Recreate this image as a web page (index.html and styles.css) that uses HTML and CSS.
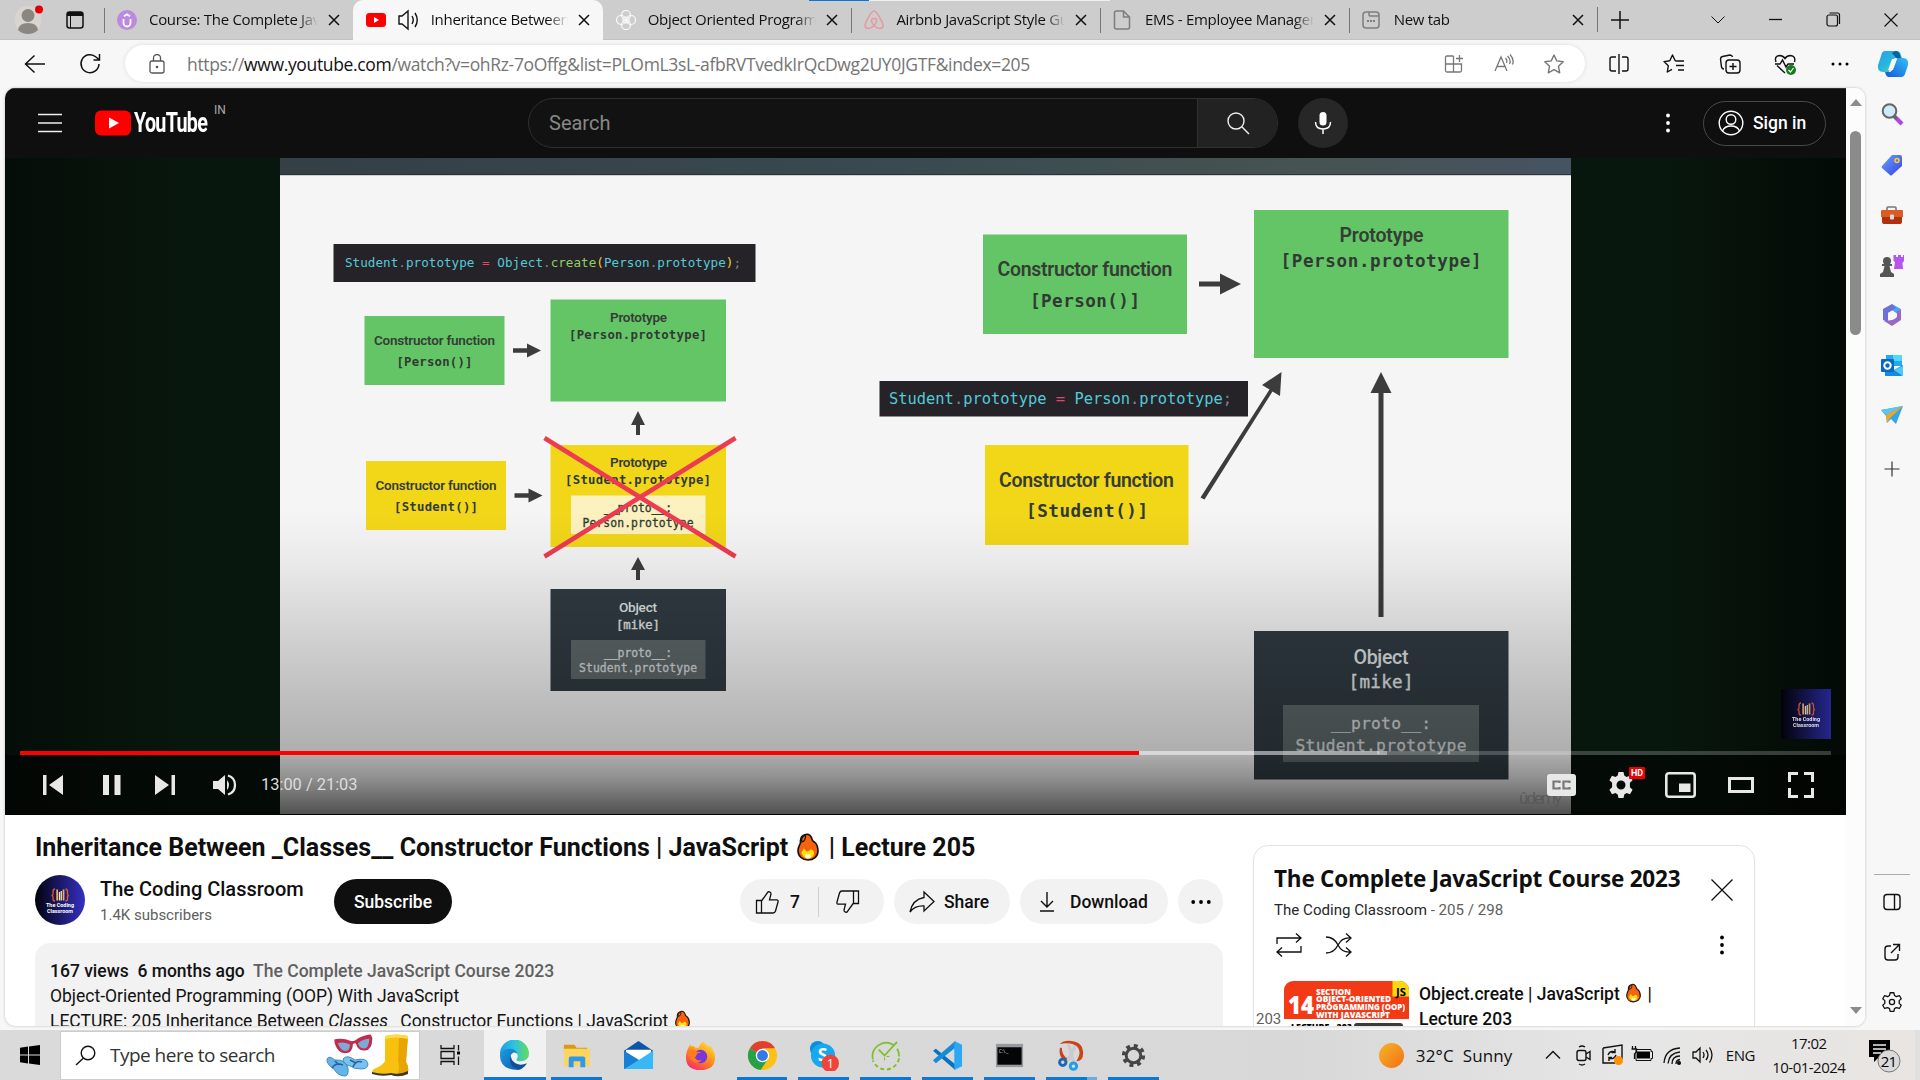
FILE: index.html
```html
<!DOCTYPE html>
<html lang="en">
<head>
<meta charset="utf-8">
<title>Inheritance Between Classes - YouTube</title>
<link rel="stylesheet" href="styles.css">
</head>
<body>
<svg class="defs" width="0" height="0">
  <defs>
    <symbol id="x" viewBox="0 0 12 12"><path d="M1 1L11 11M11 1L1 11" fill="none" stroke="#111" stroke-width="1.5"/></symbol>
    <symbol id="flame" viewBox="0 0 22 28">
      <path d="M8.500 1.500C12 .5 14.500 3 15.500 7.500C16.500 8 17 9.500 17.500 9C20 11 21 14 21 18C21 23.500 16.500 27 11 27S1 23.500 1 17.500C1 14.500 2.500 12.500 3.500 10C3 6 4 2.500 8.500 1.500Z" fill="#f7630c" stroke="#111" stroke-width="1.600"/>
      <path d="M8.500 2C5 3.500 4 6 5 9C7.500 8.500 9 5 8.500 2Z" fill="#f7630c" stroke="#111" stroke-width="1.200"/>
      <path d="M4.500 20C5 17.500 6 18 6.500 15.500C8 16 8.500 18 10 18.500C11.500 18.500 13.500 16 14.500 16.500C16.500 17.500 18 19.500 16.500 22.500C14.500 26.500 6 26.500 4.500 20Z" fill="#ffde0a"/>
      <path d="M8 24L9 20.500L11 22L13 20.500L14 24C13 26 9 26 8 24Z" fill="#fff7d6"/>
    </symbol>
    <linearGradient id="navy"><stop offset="0" stop-color="#02020c"/><stop offset="1" stop-color="#3430c4"/></linearGradient>
    <linearGradient id="navydim"><stop offset="0" stop-color="#020208"/><stop offset="1" stop-color="#26268e"/></linearGradient>
    <symbol id="books" viewBox="0 0 50 50">
      <path d="M20 14q-2 0-2 3v2q0 1.500-1.500 1.500q1.500 0 1.500 1.500v2q0 2 2 2M30.500 14q2 0 2 3v2q0 1.500 1.500 1.500q-1.500 0-1.500 1.500v2q0 2-2 2" fill="none" stroke="#e8572c" stroke-width="1.300"/>
      <path d="M21.300 14.500h1.700v11h-1.700zM27.700 14.500h1.700v11h-1.700z" fill="#e9b15c"/><path d="M23.800 17h1.300v8.500h-1.300zM25.600 16h1.300v9.500h-1.300z" fill="#f5dfae"/>
      <text x="25" y="32" class="books-text" textLength="28" lengthAdjust="spacingAndGlyphs">The Coding</text>
      <text x="25" y="37.500" class="books-text" textLength="26" lengthAdjust="spacingAndGlyphs">Classroom</text>
    </symbol>
  </defs>
</svg>

<header class="tabs">
  <div class="tabs-lead">
    <svg width="30" height="34" viewBox="0 0 30 34"><ellipse cx="15" cy="17" rx="13.500" ry="14" fill="#d8d5d0"/><circle cx="15" cy="12.500" r="6.500" fill="#8b8680"/><path d="M5 27q1-7 10-7t10 7q-4 4-10 4T5 27Z" fill="#8b8680"/><circle cx="26" cy="6.500" r="4" fill="#e80000"/></svg>
    <svg width="18" height="18" viewBox="0 0 18 18"><rect x="1" y="1" width="16" height="16" rx="2.500" fill="none" stroke="#111" stroke-width="1.500"/><path d="M1 1h16v4H1z" fill="#111"/><path d="M4.500 5v12" stroke="#111"/></svg>
  </div>
  <div class="tab"><svg class="fav" viewBox="0 0 20 20"><circle cx="10" cy="10" r="10" fill="#bb8ae0"/><path d="M6.500 9v4a3.500 3.500 0 0 0 7 0V9M7 6.300L10 4.300L13 6.300" fill="none" stroke="#fff" stroke-width="1.800"/></svg><span class="tab-title">Course: The Complete JavaScript</span><svg class="close"><use href="#x"/></svg></div>
  <div class="tab active"><svg class="fav" viewBox="0 0 20 20"><rect y="3" width="20" height="14" rx="3.500" fill="#f00"/><path d="M8 7l5 3-5 3z" fill="#fff"/></svg><svg class="sound" viewBox="0 0 22 22"><path d="M1 7h3l6-5v18l-6-5H1z" fill="none" stroke="#111" stroke-width="1.400"/><path d="M14 7q2.500 4 0 8M17 4q4.500 7 0 14" fill="none" stroke="#111" stroke-width="1.400"/></svg><span class="tab-title">Inheritance Between _Classes</span><svg class="close"><use href="#x"/></svg></div>
  <div class="tab bare"><svg class="fav" viewBox="0 0 20 20"><g fill="none" stroke="#fafafa" stroke-width="1.200"><circle cx="10" cy="5" r="4.500"/><circle cx="10" cy="15" r="4.500"/><circle cx="5" cy="10" r="4.500"/><circle cx="15" cy="10" r="4.500"/><circle cx="10" cy="10" r="3"/></g></svg><span class="tab-title">Object Oriented Programming</span><svg class="close"><use href="#x"/></svg></div>
  <div class="tab"><svg class="fav" viewBox="0 0 20 20"><path d="M10 15.500C6 11 7 8.500 10 8.500S14 11 10 15.500C6 20 1 19 1 15.500C1 13 7 1 10 1S19 13 19 15.500C19 19 14 20 10 15.500Z" fill="none" stroke="#e59a9d" stroke-width="1.500"/></svg><span class="tab-title">Airbnb JavaScript Style Guide</span><svg class="close"><use href="#x"/></svg></div>
  <div class="tab"><svg class="fav doc" viewBox="0 0 17 20"><path d="M3 1h7l6 6v10q0 2-2 2H3q-2 0-2-2V3q0-2 2-2ZM10 1v6h6" fill="none" stroke="#7d7d7d" stroke-width="1.500"/></svg><span class="tab-title">EMS - Employee Management</span><svg class="close"><use href="#x"/></svg></div>
  <div class="tab"><svg class="fav doc" viewBox="0 0 18 20"><rect x="1" y="2" width="16" height="16" rx="3" fill="none" stroke="#7d7d7d" stroke-width="1.500"/><path d="M7 2v3q0 1 1 1h9" fill="none" stroke="#7d7d7d" stroke-width="1.500"/><path d="M5 11h2M8 11h2M11 11h2" stroke="#7d7d7d" stroke-width="2"/></svg><span class="tab-title">New tab</span><svg class="close"><use href="#x"/></svg></div>
  <div class="newtab"><svg width="18" height="18" viewBox="0 0 18 18"><path d="M9 0v18M0 9h18" stroke="#111" stroke-width="1.500"/></svg></div>
  <div class="win"><svg width="14" height="8" viewBox="0 0 14 8"><path d="M.5 .5L7 7L13.500 .5" fill="none" stroke="#111"/></svg></div>
  <div class="win"><svg width="13" height="3"><path d="M0 1.500h13" stroke="#111" stroke-width="1.300"/></svg></div>
  <div class="win"><svg width="15" height="15" viewBox="0 0 15 15"><rect x="1" y="3" width="10.500" height="11" rx="2" fill="none" stroke="#111" stroke-width="1.200"/><path d="M3.500 1h8q2 0 2 2v9" fill="none" stroke="#111" stroke-width="1.200"/></svg></div>
  <div class="win"><svg width="14" height="14" viewBox="0 0 14 14"><path d="M.5 .5l13 13M13.500 .5L.5 13.500" stroke="#111" stroke-width="1.100"/></svg></div>
  <i class="loadbar"></i>
</header>

<div class="toolbar">
  <div class="nav"><svg width="22" height="20" viewBox="0 0 22 20"><path d="M21 10H2M10.500 1.500L1.500 10l9 8.500" fill="none" stroke="#111" stroke-width="1.500"/></svg></div>
  <div class="nav"><svg width="22" height="22" viewBox="0 0 22 22"><path d="M20 11a9 9 0 1 1-3-7l3 2.500M20.500 1v6h-6" fill="none" stroke="#111" stroke-width="1.500"/></svg></div>
  <div class="address">
    <svg width="16" height="20" viewBox="0 0 16 20"><rect x="1" y="7" width="14" height="12" rx="2" fill="none" stroke="#555" stroke-width="1.300"/><path d="M4.500 7V4a3.500 3.500 0 0 1 7 0v3" fill="none" stroke="#555" stroke-width="1.300"/><circle cx="8" cy="13" r="1.300" fill="#555"/></svg>
    <span class="url">https://<b>www.youtube.com</b>/watch?v=ohRz-7oOffg&amp;list=PLOmL3sL-afbRVTvedkIrQcDwg2UY0JGTF&amp;index=205</span>
    <span class="acts">
      <svg viewBox="0 0 22 22"><path d="M10.500 3H4q-1.500 0-1.500 1.500v13Q2.500 19 4 19h13q1.500 0 1.500-1.500V11h-16M10.500 3v16M16.500 2v7M13 5.500h7" fill="none" stroke="#777" stroke-width="1.300"/></svg>
      <svg viewBox="0 0 22 22"><path d="M2 18L8 4l6 14M4 13.500h8M12.500 5q2 2.500 1 5M14.500 3q4 4 2 8M17 1.500q4.500 5 2.500 10" fill="none" stroke="#777" stroke-width="1.300"/></svg>
      <svg viewBox="0 0 22 22"><path d="M11 2l2.800 5.900 6.400.9-4.700 4.500 1.200 6.500-5.700-3.200-5.700 3.200 1.200-6.500L1.800 8.800l6.400-.9Z" fill="none" stroke="#777" stroke-width="1.400" stroke-linejoin="round"/></svg>
    </span>
  </div>
  <div class="tools">
    <svg viewBox="0 0 22 22"><path d="M8 4H4Q2 4 2 6v10q0 2 2 2h4M14 4h4q2 0 2 2v10q0 2-2 2h-4M11 1v20" fill="none" stroke="#111" stroke-width="1.400"/></svg>
    <svg viewBox="0 0 22 22"><path d="M14 8l-1.800-.3L9.500 2 6.800 7.700 1 8.600l4.300 4.200-1 6.200L9 16.300M14 8h7M13 12.500h8M15 17h6" fill="none" stroke="#111" stroke-width="1.400" stroke-linejoin="round"/></svg>
    <svg viewBox="0 0 22 22"><path d="M5 16q-2 0-2.500-2L1.500 6q0-2 2-2.500L11 2q2 0 2.500 2" fill="none" stroke="#111" stroke-width="1.400"/><rect x="7" y="7" width="14" height="13" rx="3" fill="none" stroke="#111" stroke-width="1.400"/><path d="M14 10v7M10.500 13.500h7" stroke="#111" stroke-width="1.400"/></svg>
    <svg viewBox="0 0 22 22"><path d="M2 9Q0 3 5.500 2.500Q9 2.500 11 5.500Q13 2.500 16.500 2.500Q22 3 20.500 9M3 12.500L11 20M1 11h5l2.500-4 3.500 7 2-3h6" fill="none" stroke="#111" stroke-width="1.400"/><circle cx="17" cy="17" r="5" fill="#187a1e"/><path d="M14.500 17l2 2 3-4" fill="none" stroke="#fff" stroke-width="1.200"/></svg>
    <svg viewBox="0 0 22 22"><circle cx="4" cy="11" r="1.500"/><circle cx="11" cy="11" r="1.500"/><circle cx="18" cy="11" r="1.500"/></svg>
  </div>
  <svg class="copilot" viewBox="0 0 32 32"><defs><linearGradient id="c1" y2="1"><stop stop-color="#2f9bf0"/><stop offset=".5" stop-color="#25b8dc"/><stop offset="1" stop-color="#6fe086"/></linearGradient><linearGradient id="c2" x1="1" x2="0" y2="1"><stop stop-color="#2fc2f4"/><stop offset="1" stop-color="#1b54dc"/></linearGradient></defs><path d="M8 3h12q3 0 4 4l1 3h-6q-3 0-4 4l-3 10H6q-6 0-5-7l3-9Q5 3 8 3Z" fill="url(#c1)"/><path d="M18 3q4 0 5 4l1 3h-5l-4-5Z" fill="#0b5f9f"/><path d="M24 29H12q-3 0-4-5h5q2-1 3-4l4-10h6q6 0 5 7l-3 9q-1 3-4 3Z" fill="url(#c2)"/><path d="M15 11h5l-4 11h-5Z" fill="#f7f7f7"/></svg>
</div>

<div class="body">
  <main class="page">
    <div class="content">
      <div class="masthead">
        <svg class="menu" viewBox="0 0 24 20"><path d="M0 1.500h24M0 10h24M0 18.500h24" stroke="#eee" stroke-width="1.300"/></svg>
        <div class="logo"><svg width="36" height="26" viewBox="0 0 36 26"><rect width="36" height="25" y=".5" rx="6" fill="#f00"/><path d="M14 7.500l10 5.500-10 5.500z" fill="#fff"/></svg><span class="logo-word"><span>YouTube</span></span><sup>IN</sup></div>
        <div class="search"><span>Search</span><div class="search-btn"><svg width="24" height="24" viewBox="0 0 24 24"><circle cx="10" cy="10" r="8" fill="none" stroke="#eee" stroke-width="1.400"/><path d="M15.800 15.800L23 23" stroke="#eee" stroke-width="1.400"/></svg></div></div>
        <div class="mic"><svg width="20" height="26" viewBox="0 0 20 26"><rect x="6.500" y="2" width="7" height="13.500" rx="3.500" fill="#fff"/><path d="M2.500 12q0 7 7.500 7t7.500-7M10 19v5" fill="none" stroke="#fff" stroke-width="1.500"/></svg></div>
        <svg class="kebab" viewBox="0 0 4 20"><circle cx="2" cy="2.500" r="1.900"/><circle cx="2" cy="10" r="1.900"/><circle cx="2" cy="17.500" r="1.900"/></svg>
        <div class="signin"><svg width="26" height="26" viewBox="0 0 26 26" fill="none" stroke="#fff" stroke-width="1.400"><circle cx="13" cy="13" r="11.800"/><circle cx="13" cy="9.500" r="4.800"/><path d="M4.500 21q2-5 8.500-5t8.500 5"/></svg><span>Sign in</span></div>
      </div>

      <div class="player">
        <svg class="frame" viewBox="5 158 1841 657" width="1841" height="657">
          <defs>
            <linearGradient id="side"><stop stop-color="#050d08"/><stop offset=".1" stop-color="#08170d"/><stop offset=".9" stop-color="#08170d"/><stop offset="1" stop-color="#030a05"/></linearGradient>
            <linearGradient id="band"><stop stop-color="#343f46"/><stop offset=".5" stop-color="#3a4a50"/><stop offset=".8" stop-color="#465351"/><stop offset="1" stop-color="#465362"/></linearGradient>
            <linearGradient id="shade" x1="0" x2="0" y1="510" y2="814" gradientUnits="userSpaceOnUse"><stop stop-color="#000" stop-opacity="0"/><stop offset=".17" stop-color="#000" stop-opacity="0.045"/><stop offset=".4" stop-color="#000" stop-opacity=".14"/><stop offset=".62" stop-color="#000" stop-opacity=".225"/><stop offset=".8" stop-color="#000" stop-opacity=".29"/><stop offset=".88" stop-color="#000" stop-opacity=".41"/><stop offset=".94" stop-color="#000" stop-opacity=".54"/><stop offset="1" stop-color="#000" stop-opacity=".67"/></linearGradient>
            <path id="arrow" d="M0-2.200h14V-7L28 0 14 7V2.200H0Z"/>
          </defs>
          <rect x="5" y="158" width="1841" height="657" fill="url(#side)"/>
          <rect x="280" y="175" width="1291" height="639" fill="#f5f5f5"/>
          <rect x="280" y="158" width="1291" height="17" fill="url(#band)"/>
          <path d="M280 174.700h1291" stroke="#252e33"/>
          <g class="code">
            <path d="M333.500 244h422v38h-422zM879.500 381h368.500v35.500H879.500z" fill="#262328"/>
            <text x="345" y="266.500" font-size="12.600" textLength="396">Student<tspan class="d">.</tspan>prototype <tspan class="r">=</tspan> Object<tspan class="d">.</tspan><tspan class="g">create</tspan><tspan class="y">(</tspan>Person<tspan class="d">.</tspan>prototype<tspan class="y">)</tspan><tspan class="d">;</tspan></text>
            <text x="889" y="404" font-size="15.400" textLength="343">Student<tspan class="d">.</tspan>prototype <tspan class="r">=</tspan> Person<tspan class="d">.</tspan>prototype<tspan class="d">;</tspan></text>
          </g>
          <path d="M364.500 316h140v69h-140zM550.500 299.500h175.500v102H550.500zM983 234.500h204v99.500H983zM1254 210h254.500v148H1254z" fill="#64c567"/>
          <path d="M366 461h140v69H366zM550.500 445h175.500v102H550.500zM985 445h203.500v100H985z" fill="#f2d719"/>
          <path d="M550.500 589h175.500v102H550.500zM1254 631h254.500v148.500H1254z" fill="#303b42"/>
          <path d="M571 495.500h134.500v38.500H571z" fill="#fbf2bf"/>
          <path d="M571 640h134.500v39H571zM1283 705h196v57h-196z" fill="#5d6769"/>
          <g class="lbl">
            <text x="434.500" y="345" font-size="13.500" textLength="121">Constructor function</text>
            <text x="638.500" y="321.500" font-size="13.500" textLength="57">Prototype</text>
            <text x="436" y="490" font-size="13.500" textLength="121">Constructor function</text>
            <text x="638.500" y="466.500" font-size="13.500" textLength="57">Prototype</text>
            <text x="1085" y="276" font-size="19.500" textLength="175">Constructor function</text>
            <text x="1381.500" y="242" font-size="19.500" textLength="84">Prototype</text>
            <text x="1086.500" y="487" font-size="19.500" textLength="175">Constructor function</text>
            <g class="light"><text x="638" y="612" font-size="13.600" textLength="38">Object</text><text x="1381" y="664" font-size="19.600" textLength="55">Object</text></g>
          </g>
          <g class="mono">
            <text x="434.500" y="366" font-size="12.300" textLength="76">[Person()]</text>
            <text x="638" y="338.500" font-size="12.300" textLength="138">[Person.prototype]</text>
            <text x="436" y="511" font-size="12.300" textLength="84">[Student()]</text>
            <text x="638" y="483.500" font-size="12.300" textLength="146">[Student.prototype]</text>
            <text x="1085" y="306.500" font-size="17.600" textLength="110">[Person()]</text>
            <text x="1381" y="266.500" font-size="17.600" textLength="201">[Person.prototype]</text>
            <text x="1087" y="517" font-size="17.600" textLength="122">[Student()]</text>
          </g>
          <g class="mono thin">
            <g stroke="#303a32"><text x="638" y="511.500" font-size="11.400" textLength="68">__proto__:</text>
            <text x="638" y="527" font-size="11.400" textLength="111">Person.prototype</text></g>
            <g fill="#e4e7e8" stroke="#e4e7e8"><text x="638" y="628.500" font-size="12.300" textLength="44">[mike]</text><text x="1381" y="688" font-size="17.600" textLength="65">[mike]</text></g>
            <g fill="#d4d8d9" stroke="#d4d8d9"><text x="638" y="656.500" font-size="11.400" textLength="68">__proto__:</text>
            <text x="638" y="671.500" font-size="11.400" textLength="118">Student.prototype</text>
            <text x="1381" y="729" font-size="16.300" textLength="100">__proto__:</text>
            <text x="1381" y="750.500" font-size="16.300" textLength="171">Student.prototype</text></g>
          </g>
          <g fill="#3c3c3c">
            <use href="#arrow" x="513" y="350.500"/><use href="#arrow" x="514.500" y="495.500"/>
            <path d="M636 435v-10h-5L638 411l7 14h-5v10ZM636 580v-10h-5L638 557l7 13h-5v10Z"/>
            <path d="M1199 281.500h21v-8l21 10.500-21 10.500v-8h-21zM1378.500 617V393h-8L1381 372l10.500 21h-8v224z"/>
            <path d="M1204.500 499.500l68-108 7.500 4.500 1.500-24-19.500 13 7.500 4.500-69 108z"/>
          </g>
          <path d="M544.500 438L735.500 556.500M735.500 438L544.500 556.500" stroke="#ed3b51" stroke-width="4.600"/>
          <path d="M280 510h1291v304H280z" fill="url(#shade)"/>
          <text x="1519" y="804" class="udemy" textLength="43">ûdemy</text>
          <path d="M5 755H280V815H5zM1571 755h275v60h-275z" fill="#000" opacity=".5"/>
          <path d="M5 814H1846V815H5z"/>
          <rect x="1781" y="689" width="50" height="50" fill="url(#navydim)"/><use href="#books" x="1781" y="689" width="50" height="50" opacity=".85"/>
        </svg>
        <div class="overlay">
          <div class="progress"><i class="loaded"></i><i class="played"></i></div>
          <div class="controls">
            <svg class="prev" viewBox="0 0 20 20"><path d="M0 0h3.500v20H0zM20 0v20L6 10z"/></svg>
            <svg class="pause" viewBox="0 0 18 20"><path d="M0 0h6v20H0zM11.500 0h6v20h-6z"/></svg>
            <svg class="next" viewBox="0 0 20 20"><path d="M0 0v20l14-10zM16.500 0H20v20h-3.500z"/></svg>
            <svg class="vol" viewBox="0 0 24 24"><path d="M0 8v8h5l7 6V2L5 8zM14 7q4 5 0 10z"/><path d="M15 2.500q7 2 7 9.500t-7 9.500" fill="none" stroke="#e8e8e8" stroke-width="2.300"/></svg>
            <span class="time">13:00 / 21:03</span>
            <svg class="cc" viewBox="0 0 29 24"><path fill-rule="evenodd" d="M3 1h23q3 0 3 3v16q0 3-3 3H3q-3 0-3-3V4Q0 1 3 1Z"/><path d="M12.500 10V8.500h-6v7h6V14M22.500 10V8.500h-6v7h6V14" fill="none" stroke="#777" stroke-width="2.200"/></svg>
            <div class="gear"><svg viewBox="0 0 26 26"><path fill-rule="evenodd" d="M10.500 0h5l.8 3.600 2.200 1.300L22 3.800l2.600 4.400-2.700 2.500v4.600l2.700 2.500L22 22.200l-3.500-1.100-2.200 1.300L15.500 26h-5l-.8-3.600-2.200-1.300L4 22.200l-2.600-4.400 2.700-2.500v-4.600L1.400 8.200 4 3.800l3.500 1.100 2.200-1.300ZM13 8.500a4.500 4.500 0 1 0 0 9 4.500 4.500 0 0 0 0-9Z"/></svg><em>HD</em></div>
            <svg class="mini" viewBox="0 0 31 26"><rect x="1.300" y="1.300" width="28.400" height="23.400" rx="2.500" fill="none" stroke="#e8e8e8" stroke-width="2.600"/><path d="M14 11.500h11.500v8.500H14z"/></svg>
            <svg class="theater" viewBox="0 0 26 16"><rect x="1.500" y="1.500" width="23" height="13" fill="none" stroke="#e8e8e8" stroke-width="3"/></svg>
            <svg class="full" viewBox="0 0 26 26"><path d="M1.500 10V1.500H10M16 1.500h8.500V10M24.500 16v8.500H16M10 24.500H1.500V16" fill="none" stroke="#e8e8e8" stroke-width="3"/></svg>
          </div>
        </div>
      </div>

      <div class="below">
        <section class="primary">
          <h1>Inheritance Between _Classes__ Constructor Functions | JavaScript <svg class="flame"><use href="#flame"/></svg> | Lecture 205</h1>
          <div class="owner">
            <svg class="avatar" viewBox="0 0 50 50"><circle cx="25" cy="25" r="25" fill="url(#navy)"/><use href="#books" width="50" height="50"/></svg>
            <div class="chan"><strong>The Coding Classroom</strong><small>1.4K subscribers</small></div>
            <button class="subscribe">Subscribe</button>
            <div class="actions">
              <div class="pill like"><svg width="24" height="24" viewBox="0 0 24 24" fill="none" stroke="#0f0f0f" stroke-width="1.300"><path d="M1.500 10.500h5V23h-5zM6.500 11L13 1.800q3-.3 3 2.200L14.500 9.800H22q1.500.4 1 2.200L20.500 21q-.6 2-2.500 2H6.500"/></svg><span>7</span><i></i><svg width="24" height="24" viewBox="0 0 24 24" fill="none" stroke="#0f0f0f" stroke-width="1.300"><path d="M22.500 13.500h-5V1h5zM17.500 13L11 22.200q-3 .3-3-2.200l1.500-5.800H2q-1.500-.4-1-2.200L3.500 3Q4.100 1 6 1h11.500"/></svg></div>
              <div class="pill share"><svg width="26" height="24" viewBox="0 0 26 24"><path d="M15 2l10 9.500L15 21v-5Q6 15.500 1 22 3.500 9.500 15 7.500Z" fill="none" stroke="#0f0f0f" stroke-width="1.300"/></svg><span>Share</span></div>
              <div class="pill download"><svg width="16" height="20" viewBox="0 0 16 20"><path d="M8 0v15M2 9l6 6 6-6M1 19h14" fill="none" stroke="#0f0f0f" stroke-width="1.400"/></svg><span>Download</span></div>
              <div class="pill more"><svg width="20" height="4" viewBox="0 0 20 4"><circle cx="2.200" cy="2" r="1.900"/><circle cx="10" cy="2" r="1.900"/><circle cx="17.800" cy="2" r="1.900"/></svg></div>
            </div>
          </div>
          <div class="desc">
            <p class="meta">167 views&nbsp; 6 months ago&nbsp; <span>The Complete JavaScript Course 2023</span></p>
            <p>Object-Oriented Programming (OOP) With JavaScript</p>
            <p>LECTURE: 205 Inheritance Between <em>Classes</em>_ Constructor Functions | JavaScript <svg class="flame small"><use href="#flame"/></svg></p>
          </div>
        </section>
        <aside class="playlist">
          <div class="pl-head">
            <div><h2>The Complete JavaScript Course 2023</h2><p>The Coding Classroom <span>- 205 / 298</span></p></div>
            <svg class="pl-x" viewBox="0 0 22 22"><path d="M.5 .5l21 21M21.500 .5L.5 21.500" stroke="#0f0f0f" stroke-width="1.300"/></svg>
          </div>
          <div class="pl-tools">
            <svg viewBox="0 0 26 24"><path d="M1 11V5h24M20 .5l5 4.500-5 4.500M25 13v6H1M6 14.500L1 19l5 4.500" fill="none" stroke="#0f0f0f" stroke-width="1.300"/></svg>
            <svg viewBox="0 0 26 24"><path d="M0 4Q8 4 12 12T25 19M0 20Q8 20 12 12T25 5M20 .5l5 4.500-5 4.500M20 14.500l5 4.500-5 4.500" fill="none" stroke="#0f0f0f" stroke-width="1.300"/></svg>
            <svg class="pl-dots" viewBox="0 0 4 20"><circle cx="2" cy="2.500" r="1.900"/><circle cx="2" cy="10" r="1.900"/><circle cx="2" cy="17.500" r="1.900"/></svg>
          </div>
          <div class="pl-item">
            <span class="num">203</span>
            <svg class="thumb" viewBox="0 0 125 70"><defs><clipPath id="tr"><rect width="125" height="70" rx="9"/></clipPath></defs><g clip-path="url(#tr)"><path d="M0 0h125v70H0z" fill="#fff"/><path d="M0 0h125v38H0z" fill="#f23a16"/><path d="M108.500 0H125v15.500h-16.500z" fill="#f9d90b"/><path d="M70 45q0-3 3-3h43q3 0 3 3v20H70z" fill="#3b3b3f"/></g><text x="112" y="14.500" font-size="10" font-weight="700" textLength="10" lengthAdjust="spacingAndGlyphs">JS</text><g class="thumb-text"><text x="4" y="33" font-size="24" textLength="26" lengthAdjust="spacingAndGlyphs">14</text><text x="32" y="13.500" textLength="35" lengthAdjust="spacingAndGlyphs">SECTION</text><text x="32" y="21.200" textLength="75" lengthAdjust="spacingAndGlyphs">OBJECT-ORIENTED</text><text x="32" y="28.900" textLength="89" lengthAdjust="spacingAndGlyphs">PROGRAMMING (OOP)</text><text x="32" y="36.600" textLength="74" lengthAdjust="spacingAndGlyphs">WITH JAVASCRIPT</text></g><text x="7" y="48.500" font-size="8.500" font-weight="800" textLength="61" lengthAdjust="spacingAndGlyphs">LECTURE - 203</text></svg>
            <div class="pl-title">Object.create | JavaScript <svg class="flame small"><use href="#flame"/></svg> |<br>Lecture 203</div>
          </div>
        </aside>
      </div>
    </div>
    <div class="scroll"><svg width="12" height="7"><path d="M0 7L6 0l6 7z" fill="#8b8b8b"/></svg><i></i><svg width="12" height="7"><path d="M0 0h12L6 7z" fill="#8b8b8b"/></svg></div>
  </main>

  <nav class="side">
    <svg viewBox="0 0 24 24"><path d="M14 14l8 8" stroke="#b13ff0" stroke-width="4"/><path d="M13 13l4 4" stroke="#666" stroke-width="2.500"/><circle cx="9.500" cy="9" r="6.800" fill="#cfeaf8" stroke="#666" stroke-width="2"/></svg>
    <svg viewBox="0 -2 24 24"><defs><linearGradient id="tg" y2="1"><stop stop-color="#6ba5f8"/><stop offset="1" stop-color="#333fe8"/></linearGradient></defs><path d="M12 1h8q2 0 2 2v9L12 21q-1 1-2 0L2 14q-1-1 0-2Z" fill="url(#tg)"/><circle cx="17" cy="6.500" r="2" fill="#4d7af4" stroke="#ffcf24" stroke-width="1.500"/></svg>
    <svg viewBox="0 -2 24 24"><path d="M7 7V4q0-1 1-1h7q1 0 1 1v3" fill="none" stroke="#777" stroke-width="1.600"/><path d="M1 7q0-1 1-1h20q1 0 1 1v6H1z" fill="#dc5a24"/><path d="M2 13h20v5q0 2-2 2H4q-2 0-2-2z" fill="#b03110"/><rect x="10" y="10.500" width="4" height="5" rx="1" fill="#d8dcdc"/></svg>
    <svg viewBox="0 -1 24 24"><circle cx="7" cy="7" r="4" fill="#555"/><path d="M2 10h10v2H9.500l1.500 6 3 2v3H0v-3l3-2 1.500-6H2z" fill="#555"/><path d="M13.500 1h2.500v2h2V1h3v2h2V1h1v6l-1.500 2 .5 6h-9l1-7-1.500-1z" fill="#b654f0"/></svg>
    <svg viewBox="0 0 24 24"><path d="M12 1l9 5v7l-5-3-4-3-4 2z" fill="#4aa9ee"/><path d="M12 1L3 6v11l5 2V10l8-5z" fill="#6d70d8"/><path d="M21 7v10l-9 6-8-5 8-1 5-3V8z" fill="#9b68c8"/><path d="M12 8l4 2v5l-4 2-4-2v-5z" fill="#f7f7f7"/></svg>
    <svg viewBox="0 0 24 24"><path d="M6 2h15q1 0 1 1v10H6z" fill="#28a8ea"/><path d="M13 2h9v6h-9z" fill="#50d9ff"/><path d="M5 12l9 5 9-5v9q0 2-2 2H5z" fill="#148be0"/><path d="M23 13v10L14 17z" fill="#50c8f8"/><rect x="1" y="6" width="13" height="13" rx="1" fill="#0669c8"/><circle cx="7.500" cy="12.500" r="3.200" fill="none" stroke="#fff" stroke-width="2"/></svg>
    <svg viewBox="0 0 24 24"><path d="M1 7L23 3 16 21l-5-5-4 4-1-7z" fill="#32a6ec"/><path d="M1 7L23 3 6 12z" fill="#58c5f7"/><path d="M23 3L6 12l1 8 3-5z" fill="#f2a51d"/></svg>
    <svg class="plus" viewBox="0 0 24 24"><path d="M12 4.500v15M4.500 12h15" stroke="#333" stroke-width="1.200"/></svg>
    <i class="side-rule"></i>
    <svg viewBox="0 0 24 24" fill="none" stroke="#111" stroke-width="1.400"><rect x="4" y="4.500" width="16" height="15" rx="3"/><path d="M14.500 4.500v15"/></svg>
    <svg viewBox="0 0 24 24" fill="none" stroke="#111" stroke-width="1.400"><path d="M11 6H8Q5 6 5 9v8q0 3 3 3h7q3 0 3-3v-3M13 4.500h6.500V11M19.500 4.500L11 13"/></svg>
    <svg viewBox="0 0 26 26" fill="none" stroke="#111" stroke-width="1.400"><path d="M11 3h4l.7 3 2 1.200L21 6l2 3.500-2.200 2v3L23 16.500 21 20l-3.300-1-2 1.200-.7 3h-4l-.7-3-2-1.200L5 20l-2-3.500 2.200-2v-3L3 9.500 5 6l3.300 1.200 2-1.200Z" stroke-linejoin="round"/><circle cx="13" cy="13" r="2.800"/></svg>
  </nav>
</div>

<footer class="taskbar">
  <div class="start"><svg width="20" height="20" viewBox="0 0 20 20"><path d="M0 2.800L8 1.600V9.500H0zM9 1.500L20 0v9.500H9zM0 10.500h8v7.900L0 17.200zM9 10.500h11V20L9 18.500z"/></svg></div>
  <div class="find">
    <svg width="21" height="21" viewBox="0 0 21 21"><circle cx="13" cy="8" r="6.800" fill="none" stroke="#111" stroke-width="1.400"/><path d="M8.500 13L1 20" stroke="#111" stroke-width="1.400"/></svg>
    <span>Type here to search</span>
    <svg width="84" height="46" viewBox="0 0 84 46">
      <g transform="rotate(-8 28 12)"><path d="M10 5q8-1 17 4h3q9-5 17-4l1 4q-2 12-9 11-7 0-8-8-1-1-3 0-2 9-8 8-8 0-10-11z" fill="#c22b4e"/><path d="M13 9q6-1 12 3-1 6-5 6-5 0-7-9zM33 12q6-4 12-3-2 9-6 9-5 0-6-6z" fill="#7fa8d4"/></g>
      <g stroke="#3277b2" stroke-width=".8"><path d="M2 27q2-4 8 1 11-1 13 8 1 9-4 8-7-1-10-7-8-5-7-10z" fill="#62b5e8"/><path d="M18 27q4-5 12 1 12-3 13 4 0 5-7 5-7 0-11-3-7-2-7-7z" fill="#76c2f0"/></g><path d="M7 36q4-6 11-3M10 29l4 4M28 35q3-7 9-5M25 28l6 3" stroke="#2d5f9c" stroke-width="1.600" fill="none"/>
      <path d="M60 4q11-3 23 0l-2 26q3 5 2 10-6 4-17 2-8 2-19-1 0-4 4-5 7-3 9-7z" fill="#f9c10f"/><path d="M74 3.500l9 .5-2 26q3 5 2 10-4 3-10 1 2-8 0-12z" fill="#e8a500"/><path d="M60 4q11-3 23 0v3q-12-3-23 0z" fill="#ffd84e"/><path d="M47 40q10 3 19 1 9 2 17-2v3q-9 4-17 1-10 2-19-1z" fill="#3e3730"/>
    </svg>
  </div>
  <div class="tv"><svg width="22" height="20" viewBox="0 0 22 20"><path d="M1 0v3.500h13V0M1 20v-3.500h13V20M1 6.500h13v7H1zM18.500 0v5.500M18.500 11.500V20" fill="none" stroke="#111" stroke-width="1.300"/><path d="M17 6.500h3v3h-3z"/></svg></div>
  <div class="apps">
    <div class="app on"><svg viewBox="0 0 32 32"><defs><linearGradient id="e1"><stop stop-color="#1aa0e2"/><stop offset=".5" stop-color="#2fc2df"/><stop offset="1" stop-color="#64dd57"/></linearGradient><linearGradient id="e2" y2="1"><stop stop-color="#1b9de2"/><stop offset="1" stop-color="#0f5fb4"/></linearGradient></defs><path d="M1 15A15 15 0 0 1 31 14q0 7-8 8-5 0-5-2 2-2 1-5-2-5-8-5-6 1-10 5z" fill="url(#e1)"/><path d="M1 16q1-7 10-7 6 0 8 5-2-1-4-1-4 2-3 7 1 8 8 11Q1 31 1 16z" fill="url(#e2)"/><path d="M12 15q-3 12 8 16 5-1 9-7-7 3-12 0-5-3-5-9z" fill="#0d4f9c"/></svg></div>
    <div class="app run"><svg viewBox="0 0 32 32"><path d="M3 5h11l2 3h11v5H3z" fill="#db9a16"/><path d="M3 9h26q1 0 1 1v16q0 1-1 1H3z" fill="#fcd462"/><path d="M8 28V19q0-2 2-2h13q2 0 2 2v9h-5v-6h-7v6z" fill="#2e98ec"/></svg></div>
    <div class="app"><svg viewBox="0 0 32 32"><path d="M1 11L16 1l15 10v4H1z" fill="#0c55a8"/><path d="M3 10h26v9L16 23 3 13z" fill="#fff"/><path d="M1 11l16 10-15 9H1z" fill="#1780d6"/><path d="M31 11v19H2z" fill="#38b9f5"/></svg></div>
    <div class="app"><svg viewBox="0 0 32 32"><defs><linearGradient id="ff" x1=".8" x2=".2" y2="1"><stop stop-color="#ffe23b"/><stop offset=".5" stop-color="#ff9118"/><stop offset="1" stop-color="#f6256d"/></linearGradient></defs><path d="M19 1q2 4 6 6l1-1q5 6 5 12 0 13-15 13T1 18Q1 10 6 4v3l2-1 3 2h3q1-4 5-7z" fill="url(#ff)"/><circle cx="16" cy="17" r="7" fill="#7a36d8"/><path d="M4 10q5-1 8 2 3 0 5 1-4 0-5 2 0 2-2 3 3 5 8 2-6 7-12 0-3-4-2-10z" fill="#ff7d1d"/></svg></div>
    <div class="app run"><svg viewBox="0 0 32 32"><circle cx="16" cy="16" r="15" fill="#fbc116"/><path d="M16 16L3 8.500A15 15 0 0 1 29 8.500H16z" fill="#df4031"/><path d="M16 16L3 8.500A15 15 0 0 0 14 31L22 19z" fill="#27a04a"/><circle cx="16" cy="16" r="7" fill="#fff"/><circle cx="16" cy="16" r="5.600" fill="#3478e5"/></svg></div>
    <div class="app run"><svg viewBox="0 0 32 32"><circle cx="10" cy="9" r="8" fill="#0b8de0"/><circle cx="21" cy="23" r="8" fill="#0b8de0"/><circle cx="15.500" cy="16" r="12.500" fill="#18a8ef"/><text x="15" y="22" font-size="18" font-weight="700" fill="#fff" text-anchor="middle">S</text><circle cx="23" cy="24" r="9" fill="#f04438"/><text x="23" y="29" font-size="13" fill="#fff" text-anchor="middle">1</text></svg></div>
    <div class="app run"><svg viewBox="0 0 32 32" fill="none" stroke="#7fbf28"><path d="M3 20A14 14 0 0 1 24 5M28 9a14 14 0 0 1 2 8M9 10l6 6 13-14" stroke-width="1.800"/><path d="M30 19A14 14 0 0 1 3 21" stroke-width="2" stroke-dasharray="4 3"/><path d="M15 18v3M17 17h3" stroke-width="1"/></svg></div>
    <div class="app run"><svg viewBox="0 0 32 32"><path d="M1 11l3-2L24 25v6z" fill="#0872bd"/><path d="M1 21l3 3L24 8V1z" fill="#168bd6"/><path d="M23 1l8 4v22l-8 4z" fill="#2aa8f2"/></svg></div>
    <div class="app run"><svg viewBox="0 0 32 32"><path d="M2 4h28v24H2z" fill="#949a9f"/><path d="M3.500 7.500h25v18h-25z" fill="#050505"/><text x="5" y="13" font-size="5" fill="#ddd">C:\._</text></svg></div>
    <div class="app run two"><svg viewBox="0 0 32 32"><path d="M4 4q4-4 12-3 12 1 12 13 0 8-7 8l2-4q3-6-1-11-6-5-18-3z" fill="#cc4316"/><path d="M6 8q0 8 6 11l-2 3Q2 18 4 8z" fill="#cc4316"/><path d="M13 4l5 19M20 6L12 22" stroke="#c8cccf" stroke-width="3.500"/><circle cx="7" cy="23" r="3.300" fill="none" stroke="#1769b4" stroke-width="3"/><circle cx="18" cy="27" r="3.300" fill="none" stroke="#239ee4" stroke-width="3"/></svg></div>
    <div class="app run"><svg viewBox="0 0 32 32"><circle cx="16" cy="16" r="7.500" fill="none" stroke="#454545" stroke-width="3"/><circle cx="16" cy="16" r="10" fill="none" stroke="#454545" stroke-width="4" stroke-dasharray="3.927 3.927"/></svg></div>
  </div>
  <div class="weather"><i></i><span>32°C&nbsp; Sunny</span></div>
  <div class="tray">
    <svg viewBox="0 0 24 24"><path d="M5 15.500L12 8.500l7 7" fill="none" stroke="#111" stroke-width="1.400"/></svg>
    <svg viewBox="0 0 24 24" fill="none" stroke="#111" stroke-width="1.400"><rect x="6" y="7.500" width="9" height="10" rx="2"/><path d="M15 11l4-2.500v8L15 14M8 4q3-2 6 0M8 21q3 2 6 0"/></svg>
    <svg viewBox="0 0 24 24"><path d="M2 5l19-3v14M2 5v15h12" fill="none" stroke="#111" stroke-width="1.400"/><path d="M7 12q2-5 7-3M14 6v3.500h-3.500M15 12q-2 5-7 3M8 18v-3.500h3" fill="none" stroke="#111" stroke-width="1.400"/><circle cx="17.500" cy="17.500" r="4.500" fill="#ff9100"/></svg>
    <svg viewBox="0 0 24 24"><path d="M6 8.500h13v7H6z"/><path d="M5 6.500h15v2h1.500v7H20v2H5z" fill="none" stroke="#111"/><path d="M1.500 3v3M4.500 3v3M.5 6h5v3q-2 2-2 2v5" fill="none" stroke="#111" stroke-width="1.300"/></svg>
    <svg viewBox="0 0 24 24" fill="none" stroke="#111" stroke-width="1.300"><path d="M3 20Q4 6 19 5M7 20.500Q8 10 19 9M11 21q0-8 8-8M15 21q0-4 4-4.500"/><circle cx="18" cy="20" r="1.400" fill="#111"/></svg>
    <svg viewBox="0 0 24 24" fill="none" stroke="#111" stroke-width="1.300"><path d="M2 9h3l4-4v14l-4-4H2zM12 9q2 3 0 6M15 7q4 5 0 10M18.500 4.500q5 7.500 0 15"/></svg>
  </div>
  <span class="lang">ENG</span>
  <div class="clock"><span>17:02</span><span>10-01-2024</span></div>
  <svg class="notif" viewBox="0 0 34 36"><path d="M1 3h21v17H11l-5 5v-5H1z"/><path d="M5 8h13M5 12h13M5 16h8" stroke="#eee" stroke-width="1.500"/><circle cx="21" cy="24" r="11" fill="#dadada" stroke="#777"/><text x="20.500" y="29.500" font-size="15" text-anchor="middle" letter-spacing="-.8">21</text></svg>
</footer>
</body>
</html>
```
FILE: styles.css
```css
* { box-sizing: border-box; }
body { margin: 0; width: 1920px; height: 1080px; overflow: hidden; background: #f7f7f7; font-family: "Open Sans", "Noto Sans", sans-serif; color: #111; display: flex; flex-direction: column; }
svg { display: block; flex: none; }
p, h1, h2 { margin: 0; }
.defs { position: absolute; }

/* tab strip */
.tabs { height: 40px; background: #cdcdcd; display: flex; align-items: center; position: relative; flex: none; border-bottom: 1px solid #c2c2c2; }
.tabs-lead { width: 104px; display: flex; align-items: center; gap: 23px; padding-left: 13px; flex: none; }
.tab { width: 248.7px; height: 40px; display: flex; align-items: center; padding: 0 13px; position: relative; flex: none; }
.tab::before { content: ""; position: absolute; left: 0; top: 8px; height: 25px; width: 1px; background: #777; }
.tab.active::before, .tab.bare::before { display: none; }
.tab.active { background: #f7f7f7; border-radius: 10px 10px 0 0; width: 250px; }
.fav { width: 20px; height: 20px; margin-right: 12px; }
.fav.doc { width: 18px; margin-right: 14px; }
.sound { width: 22px; height: 22px; margin-right: 11px; }
.tab-title { flex: 1; font-size: 15px; letter-spacing: -.3px; white-space: nowrap; overflow: hidden; height: 24px; line-height: 23px; mask-image: linear-gradient(90deg, #000 calc(100% - 20px), transparent); }
.close { width: 12px; height: 12px; margin: 0 0 0 10px; }
.newtab { width: 44px; height: 25px; display: flex; align-items: center; justify-content: center; border-left: 1px solid #777; flex: none; }
.win { width: 57.5px; display: flex; justify-content: center; flex: none; }
.newtab + .win { margin-left: 48px; }
.loadbar { position: absolute; left: 809px; top: 0; width: 301px; height: 1px; background: linear-gradient(90deg, #0a75d4 60px, #eee 60px); }

/* toolbar */
.toolbar { height: 48px; display: flex; align-items: center; flex: none; padding: 0 11px 1px 7px; }
.nav { width: 55px; display: flex; justify-content: center; }
.address { width: 1460px; height: 37px; margin-left: 8px; border-radius: 19px; background: #fff; box-shadow: 0 0 4px #ddd; display: flex; align-items: center; padding: 0 20px 0 24px; }
.url { margin-left: 22px; font-size: 17.5px; letter-spacing: -.34px; color: #757575; white-space: nowrap; flex: 1; }
.url b { font-weight: 400; color: #111; }
.acts { display: flex; gap: 28px; }
.acts svg, .tools svg { width: 22px; height: 22px; }
.tools { display: flex; gap: 33.3px; margin-left: 23px; }
.copilot { width: 32px; height: 32px; margin-left: auto; }

.body { display: flex; height: 942px; padding-left: 5px; flex: none; }
.page { width: 1860px; height: 938px; display: flex; border-radius: 10px; overflow: hidden; background: #fff; box-shadow: 0 0 3px #bbb; font-family: Roboto, sans-serif; color: #0f0f0f; }
.content { width: 1841px; overflow: hidden; }
.scroll { width: 19px; background: #fcfcfc; display: flex; flex-direction: column; align-items: center; padding: 11px 0 12px; }
.scroll i { width: 11px; height: 204px; border-radius: 6px; background: #8b8b8b; margin: 25px 0 auto; }

/* masthead */
.masthead { height: 70px; background: #0f0f0f; display: flex; align-items: center; color: #fff; box-shadow: inset 0 1px #333; }
.menu { width: 24px; height: 20px; margin-left: 33px; }
.logo { display: flex; align-items: center; margin-left: 33px; width: 433px; }
.logo-word { width: 76px; font-weight: 700; font-size: 28px; line-height: 28px; margin-left: 3px; letter-spacing: -1px; }
.logo-word span { display: inline-block; transform: scaleX(.705); transform-origin: left; }
.logo sup { font-size: 12px; line-height: 12px; color: #aaa; margin: -26px 0 0 4px; }
.search { width: 750px; height: 50px; border: 1px solid #303030; border-radius: 25px; background: #121212; display: flex; align-items: center; justify-content: space-between; padding-left: 20px; font-size: 20px; color: #888; overflow: hidden; }
.search-btn { width: 80px; height: 50px; background: #222; border-left: 1px solid #303030; display: flex; align-items: center; justify-content: center; }
.mic { width: 50px; height: 50px; border-radius: 50%; background: #272727; margin-left: 20px; display: flex; align-items: center; justify-content: center; }
.kebab { width: 4px; height: 20px; fill: #fff; margin-left: 318px; }
.signin { width: 123px; height: 45px; border: 1px solid #494949; border-radius: 23px; margin-left: 33px; display: flex; align-items: center; padding-left: 14px; gap: 9px; font-weight: 500; font-size: 17.5px; white-space: nowrap; }

/* player */
.player { position: relative; height: 657px; overflow: hidden; }
.frame text { white-space: pre; }
.code text { font-family: "DejaVu Sans Mono", monospace; fill: #52cbd8; }
.code .d { fill: #868086; } .code .r { fill: #e2476b; } .code .g { fill: #90cf62; } .code .y { fill: #f5cb2e; }
.lbl { font-family: Roboto, sans-serif; font-weight: 600; text-anchor: middle; fill: #353d35; }
.light { font-weight: 500; fill: #dfe2e3; }
.mono { font-family: "DejaVu Sans Mono", monospace; font-weight: 700; text-anchor: middle; fill: #303a32; }
.mono.thin { font-weight: 400; stroke-width: .3px; }
.udemy { font: 17px Roboto, sans-serif; fill: #555; opacity: .8; }
.books-text { font: 700 5.500px Roboto, sans-serif; fill: #fff; text-anchor: middle; }
.overlay { position: absolute; left: 0; right: 0; bottom: 0; padding: 0 15px; }
.progress { height: 4px; background: rgba(255,255,255,.2); display: grid; }
.progress i { grid-area: 1 / 1; height: 4px; }
.loaded { width: 1367px; background: rgba(255,255,255,.4); }
.played { width: 1119px; background: #f00; }
.controls { height: 60px; display: flex; align-items: center; fill: #e8e8e8; padding-left: 23px; }
.prev, .next { width: 20px; height: 20px; }
.pause { width: 18px; height: 20px; margin-left: 40px; }
.next { margin-left: 34px; }
.vol { width: 24px; height: 24px; margin-left: 38px; }
.time { font-size: 16.4px; color: #ddd; margin: -1px 0 0 24px; width: 1286px; }
.cc { width: 29px; height: 24px; }
.gear { width: 26px; height: 26px; margin-left: 32px; position: relative; }
.gear em { position: absolute; left: 21px; top: -5px; width: 16px; height: 12px; line-height: 12px; border-radius: 1px; background: #e00; color: #fff; font-size: 9px; font-style: normal; font-weight: 700; text-align: center; }
.mini { width: 31px; height: 26px; margin-left: 31px; }
.theater { width: 26px; height: 16px; margin-left: 32px; }
.full { width: 26px; height: 26px; margin-left: 34px; }

/* below the player */
.below { display: flex; height: 211px; padding-left: 30px; }
.primary { width: 1188px; padding-top: 15px; flex: none; }
h1 { font-size: 25px; line-height: 35px; font-weight: 700; white-space: nowrap; }
.flame { display: inline-block; width: 22px; height: 28px; vertical-align: -5px; margin: 0 3px; }
.flame.small { width: 15px; height: 20px; vertical-align: -3px; margin: 0 2px; }
.owner { display: flex; align-items: center; margin-top: 10px; height: 50px; }
.avatar { width: 50px; height: 50px; }
.chan { margin: 2px 0 0 15px; width: 234px; display: flex; flex-direction: column; }
.chan strong { font-weight: 500; font-size: 20px; line-height: 27px; }
.chan small { font-size: 15px; line-height: 24px; color: #606060; }
.subscribe { width: 118px; height: 45px; border: 0; border-radius: 23px; background: #0f0f0f; color: #fff; font: 500 17.5px Roboto, sans-serif; padding: 0; margin-top: 3px; }
.actions { margin: 3px 0 0 auto; display: flex; gap: 10px; }
.pill { height: 45px; border-radius: 23px; background: #f2f2f2; display: flex; align-items: center; font-size: 17.5px; font-weight: 500; }
.like { width: 144px; padding-left: 15px; }
.like span { margin-left: 11px; width: 28px; }
.like i { width: 1px; height: 30px; background: #d0d0d0; margin-right: 17px; }
.share { width: 116px; padding-left: 15px; gap: 9px; }
.download { width: 148px; padding-left: 19px; gap: 15px; }
.more { width: 45px; justify-content: center; }
.desc { margin-top: 18px; background: #f2f2f2; border-radius: 15px; height: 120px; padding: 16px 15px; font-size: 17.5px; line-height: 25px; color: #131313; white-space: nowrap; }
.meta { font-weight: 500; }
.meta span { color: #606060; }
.playlist { width: 502px; height: 220px; margin: 30px 0 0 30px; border: 1px solid #e2e2e2; border-radius: 15px; flex: none; }
.pl-head { display: flex; justify-content: space-between; padding: 16px 21px 0 20px; }
h2 { font: 700 22.5px/34px "Open Sans", sans-serif; letter-spacing: -.22px; white-space: nowrap; }
.pl-head p { font-size: 15.1px; line-height: 25px; color: #282828; margin-top: 2px; }
.pl-head p span { color: #606060; }
.pl-x { width: 22px; height: 22px; margin-top: 17px; }
.pl-tools { display: flex; align-items: center; gap: 24px; padding: 10px 30px 0 22px; }
.pl-tools svg { width: 26px; height: 24px; }
.pl-tools .pl-dots { width: 4px; height: 20px; margin-left: auto; }
.pl-item { display: flex; margin-top: 24px; padding-left: 2px; }
.num { width: 28px; font-size: 15px; margin-top: 29px; color: #606060; }
.thumb { width: 125px; height: 70px; font-family: "Open Sans", sans-serif; }
.thumb-text { fill: #fff; font-weight: 800; font-size: 8px; }
.pl-title { font-size: 17.5px; font-weight: 500; line-height: 25px; margin: 1px 0 0 10px; white-space: nowrap; }

/* browser sidebar */
.side { flex: 1; display: flex; flex-direction: column; align-items: center; padding: 14px 2px 16px 0; gap: 26.2px; }
.side svg { width: 24px; height: 24px; }
.side .plus { margin-top: 4px; }
.side-rule { width: 36px; height: 1px; background: #aaa; margin-top: auto; margin-bottom: -12px; }

/* taskbar */
.taskbar { height: 50px; flex: none; display: flex; align-items: center; background: linear-gradient(90deg, #dadada 0, #d8d8d8 1300px, #e6e6e6 1620px, #e8e5e2); border-right: 5px solid #e0e0e0; }
.start { width: 60px; display: flex; justify-content: center; flex: none; }
.find { width: 360px; height: 49px; background: #fff; border: 1px solid #ccc; display: flex; align-items: center; padding-left: 14px; font-size: 19px; letter-spacing: -.52px; color: #333; white-space: nowrap; flex: none; }
.find span { margin-left: 14px; width: 215px; }
.tv { width: 64px; display: flex; justify-content: center; padding-right: 2px; flex: none; }
.apps { display: flex; height: 50px; flex: none; }
.app { width: 61.9px; height: 50px; display: flex; justify-content: center; align-items: center; position: relative; padding-right: 1px; }
.app svg { width: 31px; height: 31px; font-family: "Open Sans", sans-serif; }
.app.on { background: #f1f1f1; border-bottom: 3px solid #0a78d4; padding-top: 3px; }
.app.run::after { content: ""; position: absolute; left: 5px; right: 6px; bottom: 0; height: 3px; background: #0a78d4; }
.app.two::after { background: linear-gradient(90deg, #0a78d4 80%, #6bacdf 80%); }
.weather { width: 172px; margin-left: 214px; display: flex; align-items: center; gap: 12px; font-size: 17px; letter-spacing: .12px; white-space: nowrap; flex: none; }
.weather i { width: 25px; height: 25px; border-radius: 50%; background: linear-gradient(135deg, #f3b72c, #f56e12); }
.tray { display: flex; gap: 6px; margin-left: -10px; }
.tray svg { width: 24px; height: 24px; }
.lang { font-size: 15px; letter-spacing: -.5px; margin-left: 11px; width: 42px; }
.clock { display: flex; flex-direction: column; align-items: center; width: 82px; font-size: 15px; letter-spacing: -.5px; line-height: 24px; white-space: nowrap; flex: none; }
.notif { width: 34px; height: 36px; margin-left: 18px; }
```
